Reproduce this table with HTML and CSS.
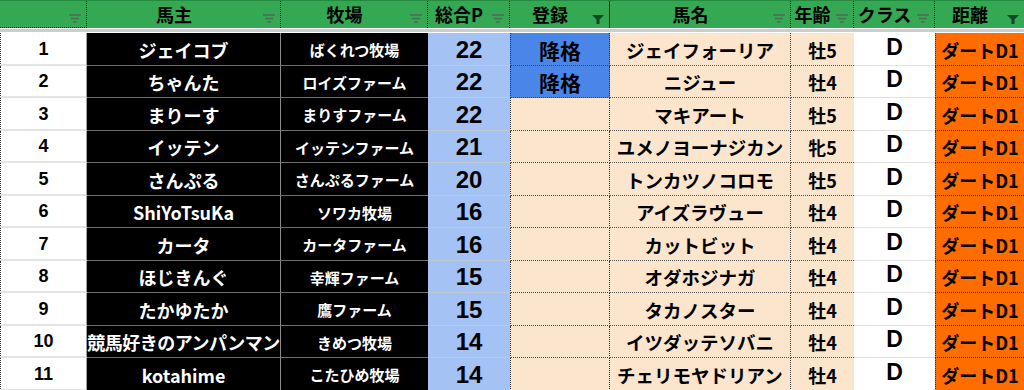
FILE: index.html
```html
<!DOCTYPE html>
<html lang="ja">
<head>
<meta charset="utf-8">
<title>ランキング</title>
<link rel="stylesheet" href="styles.css">
</head>
<body>
<div class="sheet">
  <div class="head">
    <div class="hc"><span class="ht"></span><svg class="fi" viewBox="0 0 12 9"><path d="M0 1H12M2 4.5H10M4 8H8"/></svg></div>
    <div class="hc"><span class="ht">馬主</span><svg class="fi" viewBox="0 0 12 9"><path d="M0 1H12M2 4.5H10M4 8H8"/></svg></div>
    <div class="hc"><span class="ht">牧場</span><svg class="fi" viewBox="0 0 12 9"><path d="M0 1H12M2 4.5H10M4 8H8"/></svg></div>
    <div class="hc"><span class="ht">総合P</span><svg class="fi" viewBox="0 0 12 9"><path d="M0 1H12M2 4.5H10M4 8H8"/></svg></div>
    <div class="hc solid"><span class="ht">登録</span><svg class="fa" viewBox="0 0 12 9"><path d="M0 0H12L7.5 4.5V9H4.5V4.5Z"/></svg></div>
    <div class="hc"><span class="ht">馬名</span><svg class="fi" viewBox="0 0 12 9"><path d="M0 1H12M2 4.5H10M4 8H8"/></svg></div>
    <div class="hc"><span class="ht">年齢</span><svg class="fi" viewBox="0 0 12 9"><path d="M0 1H12M2 4.5H10M4 8H8"/></svg></div>
    <div class="hc"><span class="ht">クラス</span><svg class="fi" viewBox="0 0 12 9"><path d="M0 1H12M2 4.5H10M4 8H8"/></svg></div>
    <div class="hc last"><span class="ht">距離</span><svg class="fa" viewBox="0 0 12 9"><path d="M0 0H12L7.5 4.5V9H4.5V4.5Z"/></svg></div>
  </div>
  <div class="band"></div>
  <div class="body">
    <div class="c num">1</div><div class="c owner">ジェイコブ</div><div class="c farm">ばくれつ牧場</div><div class="c pts">22</div><div class="c reg demoted">降格</div><div class="c horse">ジェイフォーリア</div><div class="c age">牡5</div><div class="c cls">D</div><div class="c dist">ダートD1</div>
    <div class="c num">2</div><div class="c owner">ちゃんた</div><div class="c farm">ロイズファーム</div><div class="c pts">22</div><div class="c reg demoted">降格</div><div class="c horse">ニジュー</div><div class="c age">牡4</div><div class="c cls">D</div><div class="c dist">ダートD1</div>
    <div class="c num">3</div><div class="c owner">まりーす</div><div class="c farm">まりすファーム</div><div class="c pts">22</div><div class="c reg"></div><div class="c horse">マキアート</div><div class="c age">牡5</div><div class="c cls">D</div><div class="c dist">ダートD1</div>
    <div class="c num">4</div><div class="c owner">イッテン</div><div class="c farm">イッテンファーム</div><div class="c pts">21</div><div class="c reg"></div><div class="c horse">ユメノヨーナジカン</div><div class="c age">牝5</div><div class="c cls">D</div><div class="c dist">ダートD1</div>
    <div class="c num">5</div><div class="c owner">さんぷる</div><div class="c farm">さんぷるファーム</div><div class="c pts">20</div><div class="c reg"></div><div class="c horse">トンカツノコロモ</div><div class="c age">牡5</div><div class="c cls">D</div><div class="c dist">ダートD1</div>
    <div class="c num">6</div><div class="c owner">ShiYoTsuKa</div><div class="c farm">ソワカ牧場</div><div class="c pts">16</div><div class="c reg"></div><div class="c horse">アイズラヴュー</div><div class="c age">牡4</div><div class="c cls">D</div><div class="c dist">ダートD1</div>
    <div class="c num">7</div><div class="c owner">カータ</div><div class="c farm">カータファーム</div><div class="c pts">16</div><div class="c reg"></div><div class="c horse">カットビット</div><div class="c age">牡4</div><div class="c cls">D</div><div class="c dist">ダートD1</div>
    <div class="c num">8</div><div class="c owner">ほじきんぐ</div><div class="c farm">幸輝ファーム</div><div class="c pts">15</div><div class="c reg"></div><div class="c horse">オダホジナガ</div><div class="c age">牡4</div><div class="c cls">D</div><div class="c dist">ダートD1</div>
    <div class="c num">9</div><div class="c owner">たかゆたか</div><div class="c farm">鷹ファーム</div><div class="c pts">15</div><div class="c reg"></div><div class="c horse">タカノスター</div><div class="c age">牡4</div><div class="c cls">D</div><div class="c dist">ダートD1</div>
    <div class="c num">10</div><div class="c owner tight">競馬好きのアンパンマン</div><div class="c farm">きめつ牧場</div><div class="c pts">14</div><div class="c reg"></div><div class="c horse">イツダッテソバニ</div><div class="c age">牡4</div><div class="c cls">D</div><div class="c dist">ダートD1</div>
    <div class="c num">11</div><div class="c owner">kotahime</div><div class="c farm">こたひめ牧場</div><div class="c pts">14</div><div class="c reg"></div><div class="c horse">チェリモヤドリアン</div><div class="c age">牡4</div><div class="c cls">D</div><div class="c dist">ダートD1</div>
  </div>
</div>
</body>
</html>
```
FILE: styles.css
```css
* { box-sizing: border-box; }
html, body { margin: 0; padding: 0; background: #fff; overflow: hidden; }
body { width: 1024px; height: 390px; font-family: "Noto Sans CJK JP", "Noto Sans", sans-serif; color: #000; }

.sheet { width: 1024px; }

.head, .body {
  display: grid;
  grid-template-columns: 87px 194px 147px 82px 100px 181px 63px 81px 89px;
}

.head { height: 28px; background: #34a853; border-top: 1px solid #238a3f; }
.hc {
  display: flex;
  align-items: stretch;
  border-right: 1px dotted #1b1b1b;
  font-weight: 700;
  font-size: 18px;
  line-height: 1;
}
.hc.solid { border-right: 1px solid #1b1b1b; }
.hc.last { border-right: none; }
.hc:first-child { border-bottom: 1px dotted #1b1b1b; }
.ht { flex: 1; display: flex; align-items: center; justify-content: center; padding-bottom: 2px; white-space: nowrap; }
.fi, .fa { width: 12px; height: 9px; margin: 13px 5px 0 2px; flex: none; }
.fi path { stroke: #4d6a56; stroke-width: 1.3; fill: none; }
.fa path { fill: #0e4a22; }
.fa { margin-top: 14px; }

.band { height: 5px; border-top: 1px solid #fff; border-bottom: 1px solid #fff; background: #cdcdcd; }

.body { grid-auto-rows: 32.5px; }
.c {
  display: flex;
  align-items: center;
  justify-content: center;
  white-space: nowrap;
  overflow: hidden;
  font-weight: 700;
  padding-top: 2px;
}

.num {
  background: #fff;
  border-left: 1px dotted #333;
  border-right: 1px solid #a0a0a0;
  border-bottom: 2px solid #e4e4e4;
  font-family: "Liberation Sans Narrow", "Liberation Sans", sans-serif;
  font-stretch: condensed;
  font-size: 18px;
}
.owner {
  background: #000;
  color: #fff;
  font-size: 18px;
  border-right: 1px solid #8c8c8c;
  border-bottom: 1px solid #6e6e6e;
}
.owner.tight { letter-spacing: -0.5px; }
.farm {
  background: #000;
  color: #fff;
  font-size: 15px;
  border-bottom: 1px solid #6e6e6e;
}
.pts {
  background: #a4c2f4;
  border-bottom: 1px solid #c2c8d2;
  font-family: "Liberation Sans", Arial, sans-serif;
  font-size: 24px;
}
.reg {
  background: #fce5cd;
  border-left: 1px dotted #333;
  border-right: 1px dotted #333;
  border-bottom: 1px dotted #444;
  font-size: 21px;
}
.reg.demoted { background: #4a86e8; }
.horse {
  background: #fce5cd;
  border-right: 1px dotted #444;
  border-bottom: 1px dotted #555;
  font-size: 18.5px;
}
.age {
  background: #fce5cd;
  border-bottom: 1px dotted #555;
  font-size: 18px;
}
.cls {
  background: #fff;
  border-bottom: 1px solid #e2e2e2;
  font-family: "Liberation Sans", Arial, sans-serif;
  font-size: 23px;
  padding-top: 0;
  padding-bottom: 3px;
}
.dist {
  background: #ff6d01;
  border-left: 1px dotted #333;
  border-bottom: 1px dotted #333;
  font-size: 18px;
}
```
